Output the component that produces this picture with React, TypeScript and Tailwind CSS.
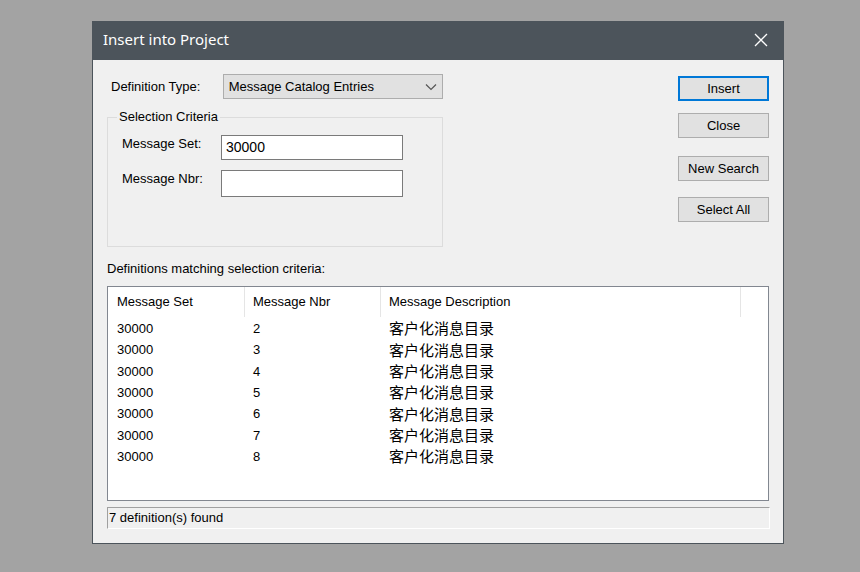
import React from "react";

const rows = [2, 3, 4, 5, 6, 7, 8];

const Btn = ({ label, primary }: { label: string; primary?: boolean }) => (
  <div
    className={
      "flex h-[25px] w-[91px] items-center justify-center bg-[#e1e1e1] text-[13px] text-black " +
      (primary ? "border-2 border-[#0078d7]" : "border border-[#adadad]")
    }
  >
    {label}
  </div>
);

export default function App() {
  return (
    <div
      className="h-[572px] w-[860px] overflow-hidden bg-[#a3a3a3] pl-[92px] pt-[21px]"
      style={{ fontFamily: '"Liberation Sans", Arial, sans-serif' }}
    >
      <div className="flex h-[523px] w-[692px] flex-col border border-[#4c545b] bg-[#f0f0f0]">
        {/* title bar */}
        <div className="flex h-[38px] shrink-0 items-center justify-between bg-[#4c545b] pb-[3px] pl-[10px] pr-[15px]">
          <span
            className="text-[15px] text-white"
            style={{ fontFamily: '"Noto Sans", sans-serif' }}
          >
            Insert into Project
          </span>
          <svg width="14" height="14" viewBox="0 0 14 14">
            <path d="M1 1 L13 13 M13 1 L1 13" stroke="#fff" strokeWidth="1.3" />
          </svg>
        </div>

        {/* body */}
        <div className="flex flex-col pl-[14px] pt-[14px] text-[13px] text-black">
          <div className="flex">
            {/* left */}
            <div className="flex w-[336px] flex-col">
              <div className="flex items-center">
                <span className="w-[116px] pl-[4px]">Definition Type:</span>
                <div className="flex h-[25px] w-[221px] items-center justify-between border border-[#adadad] bg-[#e1e1e1] pl-[5px] pr-[5px]">
                  <span>Message Catalog Entries</span>
                  <svg width="12" height="8" viewBox="0 0 12 8">
                    <path d="M1 1.5 L6 6.5 L11 1.5" fill="none" stroke="#555" strokeWidth="1.2" />
                  </svg>
                </div>
              </div>

              {/* group box */}
              <div className="relative mt-[18px] h-[130px] border border-[#dcdcdc] pl-[14px] pt-[17px]">
                <span className="absolute left-[9px] top-[-9px] bg-[#f0f0f0] px-[2px] leading-[16px]">
                  Selection Criteria
                </span>
                <div className="flex items-start">
                  <span className="-mt-[1px] w-[99px]">Message Set:</span>
                  <div className="flex h-[25px] w-[182px] items-center border border-[#7a7a7a] bg-white pl-[4px] text-[14px]">
                    30000
                  </div>
                </div>
                <div className="mt-[10px] flex items-start">
                  <span className="-mt-[1px] w-[99px]">Message Nbr:</span>
                  <div className="h-[27px] w-[182px] border border-[#7a7a7a] bg-white" />
                </div>
              </div>
            </div>

            {/* buttons */}
            <div className="ml-[235px] flex flex-col pt-[2px]">
              <Btn label="Insert" primary />
              <div className="mt-[12px]">
                <Btn label="Close" />
              </div>
              <div className="mt-[18px]">
                <Btn label="New Search" />
              </div>
              <div className="mt-[16px]">
                <Btn label="Select All" />
              </div>
            </div>
          </div>

          <div className="mt-[14px] leading-[16px]">Definitions matching selection criteria:</div>

          {/* list */}
          <div className="mt-[9px] h-[215px] w-[662px] border border-[#828790] bg-white">
            <div className="flex h-[30px] items-center">
              <div className="flex h-full w-[137px] items-center border-r border-[#e5e5e5] pl-[9px]">
                Message Set
              </div>
              <div className="flex h-full w-[136px] items-center border-r border-[#e5e5e5] pl-[8px]">
                Message Nbr
              </div>
              <div className="flex h-full w-[360px] items-center border-r border-[#e5e5e5] pl-[8px]">
                Message Description
              </div>
            </div>
            <div className="pt-[1px]">
              {rows.map((n) => (
                <div key={n} className="flex h-[21.33px] items-center">
                  <span className="w-[137px] pl-[9px]">30000</span>
                  <span className="w-[136px] pl-[8px]">{n}</span>
                  <span
                    className="pl-[8px] text-[15px]"
                    style={{ fontFamily: '"Noto Sans CJK SC", sans-serif' }}
                  >
                    客户化消息目录
                  </span>
                </div>
              ))}
            </div>
          </div>

          {/* status */}
          <div className="mt-[6px] flex h-[22px] w-[663px] items-center border-b border-l border-r border-t border-b-white border-l-[#a0a0a0] border-r-white border-t-[#a0a0a0] pl-[1px]">
            7 definition(s) found
          </div>
        </div>
      </div>
    </div>
  );
}
